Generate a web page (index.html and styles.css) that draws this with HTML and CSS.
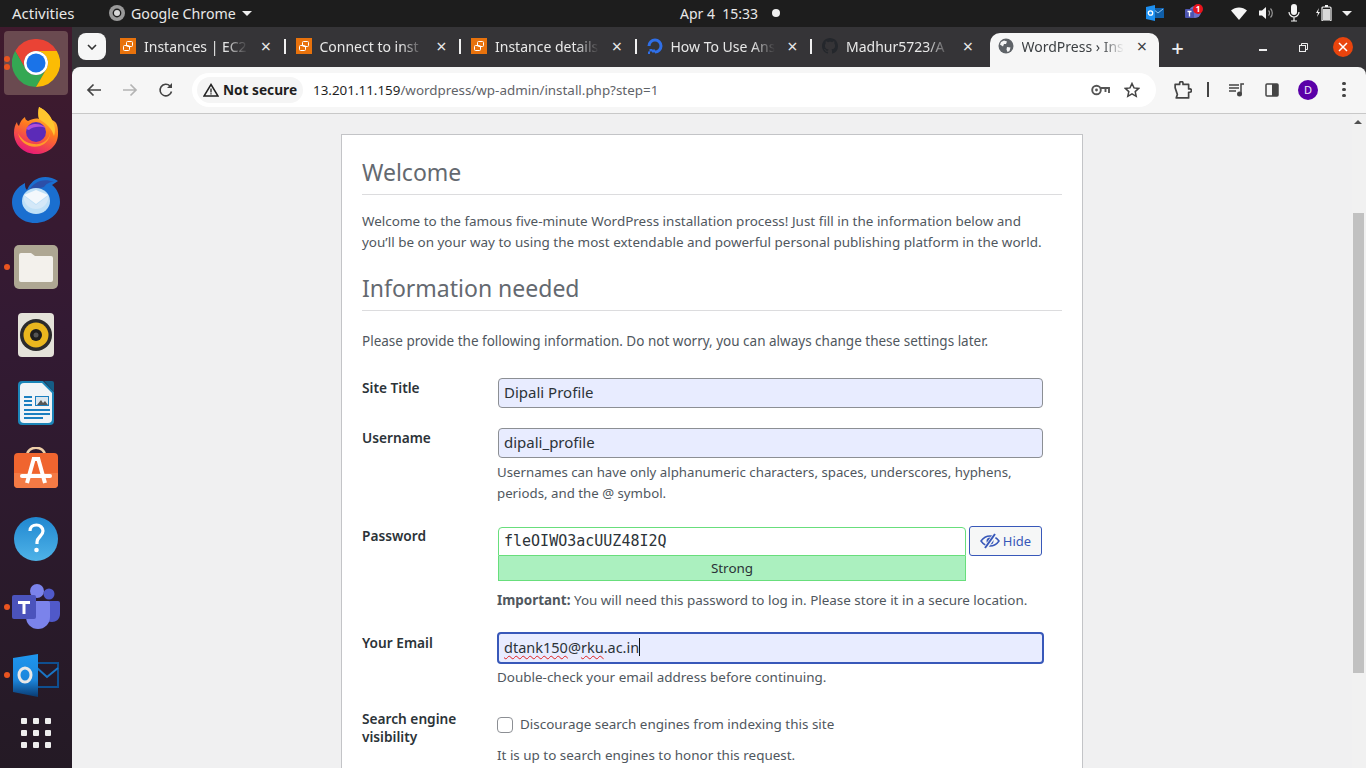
FILE: index.html
```html
<!DOCTYPE html>
<html lang="en">
<head>
  <meta charset="UTF-8">
  <title>WordPress › Installation</title>
  <link rel="stylesheet" href="styles.css">
</head>
<body>
  <header class="topbar">
    <span class="activities">Activities</span>
    <span class="app-menu">
      <svg class="app-icon" width="16" height="16" viewBox="0 0 16 16"><circle cx="8" cy="8" r="8" fill="#9a9a9a"/><circle cx="8" cy="8" r="4.4" fill="#1d1d1d"/><circle cx="8" cy="8" r="3" fill="#d8d8d8"/></svg>
      <span>Google Chrome</span>
      <i class="caret"></i>
    </span>
    <span class="clock">Apr 4&nbsp; 15:33</span>
    <i class="clock-dot"></i>
    <div class="tray">
      <svg class="tray-outlook" width="18" height="16" viewBox="0 0 18 16"><rect x="6" y="3" width="12" height="10" fill="#0f5ea8"/><path d="M7 4l5 4 5-4" fill="none" stroke="#8cc4f0"/><path d="M0 2l9-2v16l-9-2z" fill="#1e90f0"/><circle cx="4.5" cy="8" r="2.2" fill="none" stroke="#fff" stroke-width="1.3"/></svg>
      <svg class="tray-teams" width="18" height="18" viewBox="0 0 18 18"><circle cx="10" cy="8" r="6" fill="#6a70c8"/><rect x="0" y="5" width="9" height="9" rx="1" fill="#4d55b0"/><path d="M2.5 7.5h4M4.5 7.5v5" stroke="#fff" stroke-width="1.3"/><circle cx="13" cy="5" r="5" fill="#e8141c"/><text x="13" y="8" class="tray-badge">1</text></svg>
      <svg class="tray-wifi" width="16" height="14" viewBox="0 0 16 14"><path d="M0 4.500C4.500 .5 11.500 .5 16 4.500L8 14z" fill="#f4f4f4"/></svg>
      <svg class="tray-vol" width="16" height="14" viewBox="0 0 16 14"><path d="M0 4.500h3L7 1v12L3 9.500H0z" fill="#f4f4f4"/><path d="M9.500 4.500a3.500 3.500 0 0 1 0 5M11.500 2.500a6.500 6.500 0 0 1 0 9" fill="none" stroke="#999" stroke-width="1.200"/></svg>
      <svg class="tray-mic" width="12" height="18" viewBox="0 0 12 18"><rect x="3" y="0" width="6" height="11" rx="3" fill="#f4f4f4"/><path d="M1 8a5 5 0 0 0 10 0M6 13v4M3 17h6" fill="none" stroke="#f4f4f4" stroke-width="1.200"/></svg>
      <svg class="tray-batt" width="16" height="16" viewBox="0 0 16 16"><path d="M3 3L0 8h2l-1 4 3-5H2z" fill="#f4f4f4"/><rect x="6" y="2" width="9" height="14" rx="1" fill="none" stroke="#f4f4f4" stroke-width="1.200"/><rect x="9" y="0" width="3" height="2" fill="#f4f4f4"/><rect x="7" y="4" width="7" height="11" fill="#d8d8d8"/></svg>
      <i class="caret"></i>
    </div>
  </header>

  <div class="desktop">
    <nav class="dock">
      <div class="dock-item active"><i class="run-dot run-a"></i><i class="run-dot run-b"></i>
        <svg width="48" height="48" viewBox="0 0 48 48"><path d="M24 12h20.800A24 24 0 0 0 3.200 12l10.400 18A12 12 0 0 1 24 12z" fill="#ea4335"/><path d="M13.600 30 3.200 12A24 24 0 0 0 24 48l10.400-18A12 12 0 0 1 13.600 30z" fill="#34a853"/><path d="M34.400 30 24 48A24 24 0 0 0 44.800 12H24a12 12 0 0 1 10.400 18z" fill="#fbbc04"/><circle cx="24" cy="24" r="12" fill="#fff"/><circle cx="24" cy="24" r="9.500" fill="#1a73e8"/></svg>
      </div>
      <div class="dock-item">
        <svg width="48" height="48" viewBox="0 0 48 48"><defs><linearGradient id="ffa" x1="0.700" y1="0" x2="0.300" y2="1"><stop offset="0" stop-color="#ffd43a"/><stop offset="0.450" stop-color="#ff7a1f"/><stop offset="1" stop-color="#e6147c"/></linearGradient></defs><path d="M27 0c6 3 11 8 13 13 2 1 4 2 5 5 1 3 1 6 1 9 0 12-10 20-22 20S2 38 2 26c0-5 1-8 3-11 0 2 1 3 2 4 1-4 3-7 6-9 0 2 1 3 3 4 4-2 8-3 11-2-1-3-1-7 0-12z" fill="url(#ffa)"/><path d="M27 0c6 3 11 8 13 13 3 5 4 10 2 16-2-7-7-12-15-17-1-4-1-8 0-12z" fill="#ffc52e"/><circle cx="24" cy="25" r="10" fill="#5b2bb8"/><path d="M14 22c3-6 14-7 20-1-5-2-13-2-17 2z" fill="#b04ed8"/><path d="M6 26c2 10 12 16 22 13 6-2 10-7 10-13-1 7-8 12-16 11C14 36 9 32 6 26z" fill="#ff9a2a"/></svg>
      </div>
      <div class="dock-item">
        <svg width="48" height="48" viewBox="0 0 48 48"><path d="M13 8C5 12 0 19 0 27c0 12 10 21 23 21s25-9 25-21c0-8-4-14-8-17l6-4c-6-4-13-5-19-3-6 2-10 7-12 12-2-2-2-4-2-7z" fill="#1a6fd0"/><path d="M17 16c3-8 14-14 25-9-5 0-8 2-10 5z" fill="#2c4fa8"/><ellipse cx="24" cy="26" rx="14" ry="13" fill="#bfe0f7"/><path d="M12 20l12-5 12 5-12 9z" fill="#f4f8fc"/><path d="M12 21l12 9 12-9v4c-2 6-7 9-12 9s-10-3-12-9z" fill="#d4e8f8"/></svg>
      </div>
      <div class="dock-item"><i class="run-dot"></i>
        <svg width="48" height="48" viewBox="0 0 48 48"><rect x="2" y="2" width="44" height="44" rx="5" fill="#aea793"/><path d="M7 12a2 2 0 0 1 2-2h10l4 3h16a2 2 0 0 1 2 2v22a2 2 0 0 1-2 2H9a2 2 0 0 1-2-2z" fill="#f3f1ec"/></svg>
      </div>
      <div class="dock-item">
        <svg width="48" height="48" viewBox="0 0 48 48"><rect x="6" y="2" width="36" height="44" rx="4" fill="#e4e2d9"/><circle cx="24" cy="24" r="16" fill="#2b2b2b"/><circle cx="24" cy="24" r="12.500" fill="#eab71e"/><circle cx="24" cy="24" r="6" fill="#1e1e1e"/><circle cx="24" cy="24" r="2.500" fill="#555"/></svg>
      </div>
      <div class="dock-item">
        <svg width="48" height="48" viewBox="0 0 48 48"><path d="M6 6a4 4 0 0 1 4-4h21l11 11v29a4 4 0 0 1-4 4H10a4 4 0 0 1-4-4z" fill="#1c85b8"/><path d="M8 8a4 4 0 0 1 4-4h18l10 10v26a4 4 0 0 1-4 4H12a4 4 0 0 1-4-4z" fill="#f2f4f7"/><path d="M32 2h8a2 2 0 0 1 2 2v9z" fill="#155d86"/><path d="M12 17h8v2h-8zM12 21h8v2h-8zM12 25h8v2h-8zM12 30h26v2H12zM12 34h26v2H12zM12 38h19v2H12z" fill="#1c7fc0"/><rect x="23" y="17" width="14" height="10" fill="#1c7fc0"/><rect x="24" y="18" width="12" height="8" fill="#dce6ee"/><path d="M25 26l4-5 2 3 2-2 3 4z" fill="#555"/></svg>
      </div>
      <div class="dock-item">
        <svg width="48" height="48" viewBox="0 0 48 48"><path d="M15 9c0-11 18-11 18 0" fill="none" stroke="#eecfa8" stroke-width="2.500"/><path d="M2 10a4 4 0 0 1 4-4h36a4 4 0 0 1 4 4v27a4 4 0 0 1-4 4H6a4 4 0 0 1-4-4z" fill="#f0652f"/><path d="M2 26h44v11a4 4 0 0 1-4 4H6a4 4 0 0 1-4-4z" fill="#f47a45"/><path d="M22 11l-7 25M26 11l7 25M20 12h8" fill="none" stroke="#fff" stroke-width="4"/><rect x="8" y="27" width="32" height="4" rx="2" fill="#fff"/></svg>
      </div>
      <div class="dock-item">
        <svg width="48" height="48" viewBox="0 0 48 48"><defs><linearGradient id="hlp" x1="0" y1="0" x2="0" y2="1"><stop offset="0" stop-color="#2087d0"/><stop offset="1" stop-color="#4fb3e8"/></linearGradient></defs><circle cx="24" cy="24" r="22" fill="url(#hlp)"/><path d="M18 16c0-4 3-6 6.500-6s6.500 2.500 6.500 6c0 5-6 6-6 11v2" fill="none" stroke="#fff" stroke-width="3.200"/><circle cx="24.500" cy="35" r="2.300" fill="#fff"/></svg>
      </div>
      <div class="dock-item"><i class="run-dot"></i>
        <svg width="48" height="48" viewBox="0 0 48 48"><circle cx="37" cy="11" r="5.500" fill="#5059c9"/><path d="M32 18h14a2 2 0 0 1 2 2v11c0 5-4 8-8 8s-6-2-6-2z" fill="#5059c9"/><circle cx="25" cy="8" r="7" fill="#7b83eb"/><path d="M14 18h22a2 2 0 0 1 2 2v14a12 12 0 0 1-24 0z" fill="#7b83eb"/><rect x="0" y="12" width="24" height="24" rx="2" fill="#4b53bc"/><path d="M6 18h12v3h-4.500v10h-3V21H6z" fill="#fff"/></svg>
      </div>
      <div class="dock-item"><i class="run-dot"></i>
        <svg width="48" height="48" viewBox="0 0 48 48"><rect x="20" y="12" width="26" height="24" fill="none" stroke="#0f4f90" stroke-width="2"/><path d="M24 16l11 10 11-9" fill="none" stroke="#1a75c4" stroke-width="2"/><defs><linearGradient id="olk" x1="0" y1="0" x2="0" y2="1"><stop offset="0" stop-color="#1e96ee"/><stop offset="0.600" stop-color="#1c86dc"/><stop offset="1" stop-color="#0a3a70"/></linearGradient></defs><path d="M1 7l25-4v43L1 41z" fill="url(#olk)"/><ellipse cx="13" cy="24" rx="6" ry="7" fill="none" stroke="#e8e8e8" stroke-width="3"/></svg>
      </div>
      <div class="dock-item grid-item">
        <div class="app-grid"><i></i><i></i><i></i><i></i><i></i><i></i><i></i><i></i><i></i></div>
      </div>
    </nav>

    <div class="browser">
      <div class="tabstrip">
        <button class="tab-search"><svg width="10" height="6" viewBox="0 0 10 6"><path d="M1 1l4 4 4-4" fill="none" stroke="#333" stroke-width="1.600"/></svg></button>
        <div class="tab">
          <svg class="favicon" width="16" height="16" viewBox="0 0 16 16"><rect width="16" height="16" fill="#e8720c"/><g fill="none" stroke="#fff" stroke-width="1"><rect x="6.500" y="3.500" width="6" height="5" rx="1"/><rect x="3.500" y="7.500" width="6" height="5" rx="1"/></g></svg>
          <span class="tab-title">Instances | EC2</span><span class="tab-x">×</span>
        </div>
        <div class="tab">
          <svg class="favicon" width="16" height="16" viewBox="0 0 16 16"><rect width="16" height="16" fill="#e8720c"/><g fill="none" stroke="#fff" stroke-width="1"><rect x="6.500" y="3.500" width="6" height="5" rx="1"/><rect x="3.500" y="7.500" width="6" height="5" rx="1"/></g></svg>
          <span class="tab-title">Connect to inst</span><span class="tab-x">×</span>
        </div>
        <div class="tab">
          <svg class="favicon" width="16" height="16" viewBox="0 0 16 16"><rect width="16" height="16" fill="#e8720c"/><g fill="none" stroke="#fff" stroke-width="1"><rect x="6.500" y="3.500" width="6" height="5" rx="1"/><rect x="3.500" y="7.500" width="6" height="5" rx="1"/></g></svg>
          <span class="tab-title">Instance details</span><span class="tab-x">×</span>
        </div>
        <div class="tab">
          <svg class="favicon" width="16" height="16" viewBox="0 0 16 16"><path d="M8 14A6 6 0 1 0 2 8" fill="none" stroke="#2f6fe8" stroke-width="3"/><path d="M5 11.500h3v3H5zM2.500 11H5v2.500H2.500zM1 13.500h2V16H1z" fill="#2f6fe8"/></svg>
          <span class="tab-title">How To Use Ans</span><span class="tab-x">×</span>
        </div>
        <div class="tab">
          <svg class="favicon" width="16" height="16" viewBox="0 0 16 16"><path d="M8 0C3.580 0 0 3.580 0 8c0 3.540 2.290 6.530 5.470 7.590.4.070.55-.17.55-.38 0-.19-.01-.82-.01-1.490-2.010.37-2.530-.49-2.690-.94-.09-.23-.48-.94-.82-1.130-.28-.15-.68-.52-.01-.53.63-.01 1.080.58 1.230.82.72 1.210 1.870.87 2.330.66.070-.52.28-.87.51-1.070-1.780-.2-3.640-.89-3.640-3.950 0-.87.31-1.590.82-2.150-.08-.2-.36-1.020.08-2.120 0 0 .67-.21 2.200.82.64-.18 1.320-.27 2-.27.68 0 1.360.09 2 .27 1.530-1.040 2.200-.82 2.200-.82.44 1.100.16 1.920.08 2.120.51.56.82 1.270.82 2.150 0 3.070-1.870 3.750-3.650 3.950.29.25.54.73.54 1.480 0 1.070-.01 1.930-.01 2.200 0 .21.15.46.55.38A8.013 8.013 0 0016 8c0-4.420-3.580-8-8-8z" fill="#24272c"/></svg>
          <span class="tab-title">Madhur5723/A</span><span class="tab-x">×</span>
        </div>
        <div class="tab active">
          <svg class="favicon" width="16" height="16" viewBox="0 0 16 16"><circle cx="8" cy="8" r="7.500" fill="#5f6368"/><path d="M3 4l3-1.500 3 1-1 2.500H6L5 8.500 2 6.500zM9 9l3.500.5-1 3.500-2 1-1-2.500z" fill="#f6f6f6"/></svg>
          <span class="tab-title">WordPress › Ins</span><span class="tab-x">×</span>
        </div>
        <span class="tab-new">+</span>
        <div class="win-controls">
          <i class="win-min"></i>
          <svg class="win-max" width="9" height="9" viewBox="0 0 9 9"><path d="M2.500 2V.5h6v6H7" fill="none" stroke="#eee"/><rect x=".5" y="2.500" width="6" height="6" fill="none" stroke="#eee"/></svg>
          <span class="win-close"><svg width="10" height="10" viewBox="0 0 10 10"><path d="M1 1l8 8M9 1l-8 8" stroke="#fff" stroke-width="1.500"/></svg></span>
        </div>
      </div>

      <div class="toolbar">
        <svg class="tb-back" width="16" height="16" viewBox="0 0 16 16"><path d="M15 8H2M7.500 2.500L2 8l5.500 5.500" fill="none" stroke="#444" stroke-width="1.700"/></svg>
        <svg class="tb-fwd" width="16" height="16" viewBox="0 0 16 16"><path d="M1 8h13M8.500 2.500L14 8l-5.500 5.500" fill="none" stroke="#b4b4b4" stroke-width="1.700"/></svg>
        <svg class="tb-reload" width="16" height="16" viewBox="0 0 16 16"><path d="M13.500 9.500A5.800 5.800 0 1 1 12 4" fill="none" stroke="#444" stroke-width="1.600"/><path d="M14 1v5H9z" fill="#444"/></svg>
        <div class="omnibox">
          <span class="not-secure">
            <svg width="16" height="14" viewBox="0 0 16 14"><path d="M8 1.500L15 13H1z" fill="none" stroke="#222" stroke-width="1.500"/><path d="M8 5.500v4M8 10.300v1.300" stroke="#222" stroke-width="1.300"/></svg>
            Not secure
          </span>
          <span class="url"><b>13.201.11.159</b>/wordpress/wp-admin/install.php?step=1</span>
          <svg class="omni-key" width="19" height="12" viewBox="0 0 19 12"><circle cx="5.500" cy="6" r="4.300" fill="none" stroke="#555" stroke-width="1.900"/><circle cx="5.500" cy="6" r="1.400" fill="#555"/><path d="M9.500 4H18v5M14.500 4.500V8" fill="none" stroke="#555" stroke-width="1.900"/></svg>
          <svg class="omni-star" width="16" height="16" viewBox="0 0 16 16"><path d="M8 1.500l2 4.400 4.700.5-3.500 3.200 1 4.700L8 11.900l-4.200 2.400 1-4.700L1.300 6.400 6 5.900z" fill="none" stroke="#444" stroke-width="1.500"/></svg>
        </div>
        <svg class="tb-ext" width="18" height="18" viewBox="0 0 16 16"><path d="M1 3h4V2a1.500 1.500 0 0 1 3 0v1h5v4h1a1.500 1.500 0 0 1 0 3h-1v5H2l1-3-1-3-1-3z" fill="none" stroke="#444" stroke-width="1.500" stroke-linejoin="round"/></svg>
        <i class="tb-sep"></i>
        <svg class="tb-media" width="16" height="14" viewBox="0 0 16 14"><path d="M0 2h10M0 5h10M0 8h7" stroke="#444" stroke-width="1.500"/><path d="M12 11V1h3" fill="none" stroke="#444" stroke-width="1.500"/><circle cx="10.500" cy="11" r="2.500" fill="#444"/></svg>
        <svg class="tb-side" width="14" height="14" viewBox="0 0 14 14"><rect x="1" y="1" width="12" height="12" rx="1" fill="none" stroke="#444" stroke-width="1.500"/><rect x="7" y="1" width="6" height="12" fill="#444"/></svg>
        <span class="avatar">D</span>
        <span class="tb-menu"><i></i><i></i><i></i></span>
      </div>

      <div class="viewport">
        <main class="page">
          <div class="card">
            <h1>Welcome</h1>
            <p class="intro">Welcome to the famous five-minute WordPress installation process! Just fill in the information below and you’ll be on your way to using the most extendable and powerful personal publishing platform in the world.</p>
            <h1>Information needed</h1>
            <p class="lead">Please provide the following information. Do not worry, you can always change these settings later.</p>

            <div class="row row-title">
              <label>Site Title</label>
              <div><input class="field" type="text" value="Dipali Profile"></div>
            </div>
            <div class="row row-user">
              <label>Username</label>
              <div>
                <input class="field" type="text" value="dipali_profile">
                <p class="hint hint-user">Usernames can have only alphanumeric characters, spaces, underscores, hyphens, periods, and the @ symbol.</p>
              </div>
            </div>
            <div class="row row-pass">
              <label>Password</label>
              <div>
                <div class="pass-line">
                  <div class="pass-col">
                    <input class="pass-input" type="text" value="fleOIWO3acUUZ48I2Q">
                    <div class="strength">Strong</div>
                  </div>
                  <button class="hide-btn">
                    <svg width="20" height="16" viewBox="0 0 20 16"><path d="M1 8c2.500-3.500 5.500-5 9-5s6.500 1.500 9 5c-2.500 3.500-5.500 5-9 5S3.500 11.500 1 8z" fill="none" stroke="#3858b9" stroke-width="1.500"/><circle cx="10" cy="8" r="3.500" fill="#3858b9"/><path d="M15.500 1L5.500 15" stroke="#f6f7f7" stroke-width="4"/><path d="M15 1L5 15" stroke="#3858b9" stroke-width="2"/></svg>
                    Hide
                  </button>
                </div>
                <p class="hint hint-pass"><strong>Important:</strong> You will need this password to log in. Please store it in a secure location.</p>
              </div>
            </div>
            <div class="row row-email">
              <label>Your Email</label>
              <div>
                <div class="email-field"><span class="typo">dtank150</span>@<span class="typo">rku</span>.ac.in<i class="text-caret"></i></div>
                <p class="hint hint-email">Double-check your email address before continuing.</p>
              </div>
            </div>
            <div class="row row-search">
              <label>Search engine visibility</label>
              <div>
                <div class="check-line"><input class="check" type="checkbox"><span>Discourage search engines from indexing this site</span></div>
                <p class="hint hint-search">It is up to search engines to honor this request.</p>
              </div>
            </div>
          </div>
        </main>
        <div class="scrollbar">
          <i class="scroll-up"></i>
          <div class="scroll-thumb"></div>
        </div>
      </div>
    </div>
  </div>
</body>
</html>
```

FILE: styles.css
```css
* {
  box-sizing: border-box;
}
html, body {
  margin: 0;
  height: 768px;
  overflow: hidden;
}
body {
  font-family: "Noto Sans", "Open Sans", sans-serif;
  display: flex;
  flex-direction: column;
}
i {
  display: block;
}

/* gnome top bar */
.topbar {
  height: 27px;
  flex: none;
  background: #1d1d1d;
  color: #e8e8e8;
  font-size: 15px;
  display: flex;
  align-items: center;
  padding: 0 0 1px 12px;
}
.activities {
  width: 97px;
}
.app-menu {
  display: flex;
  align-items: center;
  width: 140px;
  gap: 6px;
  font-size: 14.2px;
  white-space: nowrap;
}
.app-icon {
  flex: none;
}
.caret {
  flex: none;
  width: 0;
  height: 0;
  border-left: 5px solid transparent;
  border-right: 5px solid transparent;
  border-top: 5px solid #eee;
}
.clock {
  margin-left: 431px;
  width: 90px;
  font-size: 14px;
}
.clock-dot {
  width: 8px;
  height: 8px;
  border-radius: 50%;
  background: #f0f0f0;
  margin-left: 2px;
}
.tray {
  margin-left: auto;
  display: flex;
  align-items: center;
  padding-right: 14px;
}
.tray-teams {
  margin-left: 21px;
}
.tray-wifi {
  margin-left: 28px;
}
.tray-vol {
  margin-left: 12px;
}
.tray-mic {
  margin-left: 13px;
}
.tray-batt {
  margin-left: 16px;
}
.tray .caret {
  margin-left: 10px;
}
.tray-badge {
  fill: #fff;
  font-size: 8px;
  font-weight: 700;
  text-anchor: middle;
}

.desktop {
  flex: 1;
  display: flex;
  min-height: 0;
}

/* launcher */
.dock {
  width: 72px;
  flex: none;
  padding-top: 2px;
  background: linear-gradient(180deg, #3f1a2d 0%, #331a33 40%, #241a25 100%);
  display: flex;
  flex-direction: column;
  align-items: center;
}
.dock-item {
  width: 72px;
  height: 68px;
  flex: none;
  position: relative;
  display: flex;
  align-items: center;
  justify-content: center;
}
.dock-item.active::before {
  content: "";
  position: absolute;
  left: 4px;
  top: 2px;
  width: 64px;
  height: 64px;
  border-radius: 4px;
  background: #6a4a50;
}
.dock-item svg {
  position: relative;
}
.run-dot {
  position: absolute;
  left: 4px;
  top: 31px;
  width: 6px;
  height: 6px;
  border-radius: 50%;
  background: #e95420;
  z-index: 1;
}
.run-a {
  top: 27px;
}
.run-b {
  top: 35px;
}
.grid-item {
  height: 48px;
}
.app-grid {
  display: grid;
  grid-template-columns: repeat(3, 6px);
  gap: 6px;
}
.app-grid i {
  height: 6px;
  border-radius: 1px;
  background: #eee;
}

/* browser window */
.browser {
  flex: 1;
  min-width: 0;
  display: flex;
  flex-direction: column;
  background: #353437;
}
.tabstrip {
  height: 40px;
  flex: none;
  display: flex;
  align-items: flex-end;
  padding-left: 6px;
  color: #e8e8e8;
}
.tab-search {
  width: 28px;
  height: 27px;
  margin: 0 6px 7px 0;
  padding: 0;
  border: none;
  border-radius: 8px;
  background: #f6f6f6;
  display: flex;
  align-items: center;
  justify-content: center;
}
.tab {
  width: 175.5px;
  height: 34px;
  flex: none;
  padding: 0 10px 8px 8px;
  display: flex;
  align-items: center;
  font-size: 14px;
  position: relative;
}
.tab::after {
  content: "";
  position: absolute;
  right: 2px;
  top: 6px;
  width: 2px;
  height: 15px;
  background: #f0f0f0;
}
.tab:nth-child(6)::after,
.tab.active::after {
  display: none;
}
.favicon {
  flex: none;
  margin-right: 8px;
}
.tab-title {
  width: 104px;
  white-space: nowrap;
  -webkit-mask-image: linear-gradient(90deg, #000 78%, transparent 100%);
  mask-image: linear-gradient(90deg, #000 78%, transparent 100%);
}
.tab-x {
  margin-left: 11px;
  width: 14px;
  font-size: 18px;
  line-height: 18px;
  text-align: center;
}
.tab.active {
  width: 169px;
  background: #f6f6f6;
  color: #3c4043;
  border-radius: 10px 10px 0 0;
  padding-left: 8px;
}
.tab.active .tab-title {
  width: 102px;
}
.tab.active .tab-x {
  margin-left: 12px;
}
.tab-new {
  width: 18px;
  margin: 0 0 7px 10px;
  font-size: 22px;
  font-weight: 500;
  line-height: 26px;
  text-align: center;
  color: #eee;
}
.win-controls {
  margin-left: auto;
  margin-bottom: 7px;
  height: 26px;
  display: flex;
  align-items: center;
}
.win-min {
  width: 8px;
  height: 2px;
  background: #eee;
  margin: 6px 0 0 0;
}
.win-max {
  margin-left: 32px;
}
.win-close {
  width: 20px;
  height: 20px;
  border-radius: 50%;
  background: #e9440d;
  margin: 0 13px 0 25px;
  display: flex;
  align-items: center;
  justify-content: center;
}

.toolbar {
  height: 47px;
  flex: none;
  background: #f6f6f6;
  border-bottom: 1px solid #c8c8c8;
  border-radius: 8px 8px 0 0;
  display: flex;
  align-items: center;
  padding: 0 0 1px 14px;
}
.tb-fwd {
  margin-left: 20px;
}
.tb-reload {
  margin-left: 20px;
}
.omnibox {
  width: 964px;
  height: 34px;
  margin-left: 18px;
  border-radius: 17px;
  background: #fff;
  display: flex;
  align-items: center;
  padding-left: 5px;
  font-size: 14px;
}
.not-secure {
  width: 106px;
  height: 26px;
  border-radius: 13px;
  background: #f5f5f5;
  display: flex;
  align-items: center;
  justify-content: center;
  gap: 4px;
  font-size: 13.7px;
  font-weight: 700;
  color: #1f1f1f;
}
.url {
  margin-left: 10px;
  font-size: 13.4px;
  color: #5f6368;
}
.url b {
  font-weight: 400;
  color: #1f1f1f;
}
.omni-key {
  margin-left: auto;
}
.omni-star {
  margin: 0 16px 0 14px;
}
.tb-ext {
  margin-left: 18px;
}
.tb-sep {
  width: 2px;
  height: 15px;
  background: #444;
  margin-left: 15px;
}
.tb-media {
  margin-left: 20px;
}
.tb-side {
  margin-left: 20px;
}
.avatar {
  width: 20px;
  height: 20px;
  margin-left: 19px;
  border-radius: 50%;
  background: #5a00a8;
  color: #f0e8f8;
  font-size: 11px;
  display: flex;
  align-items: center;
  justify-content: center;
}
.tb-menu {
  margin-left: 24px;
  display: flex;
  flex-direction: column;
  gap: 2.5px;
}
.tb-menu i {
  width: 3.5px;
  height: 3.5px;
  border-radius: 50%;
  background: #444;
}

/* wordpress install page */
.viewport {
  flex: 1;
  min-height: 0;
  display: flex;
  background: #f0f0f1;
}
.page {
  flex: 1;
  overflow: hidden;
  padding-top: 20px;
}
.card {
  width: 742px;
  margin: 0 auto;
  background: #fff;
  border: 1px solid #c3c4c7;
  padding: 20px 20px 30px;
  color: #50575e;
  font-size: 13.45px;
  line-height: 21px;
}
h1 {
  margin: 0;
  padding-bottom: 5px;
  border-bottom: 1px solid #dcdcde;
  color: #646970;
  font-size: 23px;
  font-weight: 400;
  line-height: 35px;
  height: 40px;
}
p {
  margin: 0;
}
.intro {
  max-width: 690px;
  margin: 16px 0 18px;
  font-size: 13.48px;
}
.lead {
  margin: 20px 0 26px;
  font-size: 13.5px;
}
.row {
  display: grid;
  grid-template-columns: 135px 1fr;
}
label {
  padding-top: 2px;
  font-size: 13.7px;
  font-weight: 600;
  color: #2c3338;
  line-height: 18px;
}
.field {
  display: block;
  width: 545px;
  height: 30px;
  padding: 0 5px 2px;
  margin-left: 1px;
  background: #e8ecff;
  border: 1px solid #8c8f94;
  border-radius: 4px;
  color: #2c3338;
  font-family: inherit;
  font-size: 15px;
}
.row-title {
  height: 50px;
}
.row-title label,
.row-user label {
  padding-top: 1px;
}
.row-user {
  height: 97px;
}
.hint {
  margin-top: 3px;
}
.hint-user {
  margin-top: 4px;
  font-size: 13.25px;
}
.pass-line {
  display: flex;
  margin-left: 1px;
}
.pass-col {
  width: 468px;
  padding-top: 1px;
}
.pass-input {
  display: block;
  width: 100%;
  height: 29px;
  padding: 0 5px 2px;
  border: 1px solid #68de7c;
  border-radius: 4px 4px 0 0;
  background: #fff;
  color: #2c3338;
  font-family: "DejaVu Sans Mono", monospace;
  font-size: 15px;
}
.strength {
  height: 25px;
  border: 1px solid #68de7c;
  border-top: none;
  background: #abf0bf;
  color: #2c3338;
  text-align: center;
  line-height: 24px;
}
.hide-btn {
  width: 73px;
  height: 30px;
  margin-left: 3px;
  padding: 0;
  border: 1px solid #3858b9;
  border-radius: 3px;
  background: #f6f7f7;
  color: #3858b9;
  font-family: inherit;
  font-size: 13px;
  display: flex;
  align-items: center;
  justify-content: center;
  gap: 3px;
}
.hint-pass {
  margin-top: 9px;
}
.row-pass {
  height: 106px;
  margin-top: 1px;
}
.row-pass label {
  padding-top: 1px;
}
.row-email {
  height: 76px;
}
.email-field {
  width: 547px;
  height: 32px;
  padding: 0 5px 2px;
  background: #e8ecff;
  border: 2px solid #3858b9;
  border-radius: 4px;
  color: #2c3338;
  font-size: 14.5px;
  line-height: 28px;
  display: flex;
  align-items: center;
}
.typo {
  text-decoration: underline wavy #e02020 1px;
  text-underline-offset: 2px;
}
.text-caret {
  width: 1px;
  height: 18px;
  background: #111;
}
.hint-email {
  margin-top: 3px;
}
.check-line {
  display: flex;
  align-items: center;
  gap: 7px;
  margin-top: 6px;
}
.check {
  appearance: none;
  width: 16px;
  height: 16px;
  margin: 0;
  background: #fff;
  border: 1px solid #8c8f94;
  border-radius: 4px;
}
.hint-search {
  margin-top: 10px;
}

/* scrollbar */
.scrollbar {
  width: 14px;
  flex: none;
  background: #f1f1f1;
  padding: 6px 2px 0 1px;
}
.scroll-up {
  width: 0;
  height: 0;
  margin-left: 1px;
  border-left: 4px solid transparent;
  border-right: 4px solid transparent;
  border-bottom: 4px solid #505050;
}
.scroll-thumb {
  height: 460px;
  margin-top: 89px;
  background: #c1c1c1;
}
```
